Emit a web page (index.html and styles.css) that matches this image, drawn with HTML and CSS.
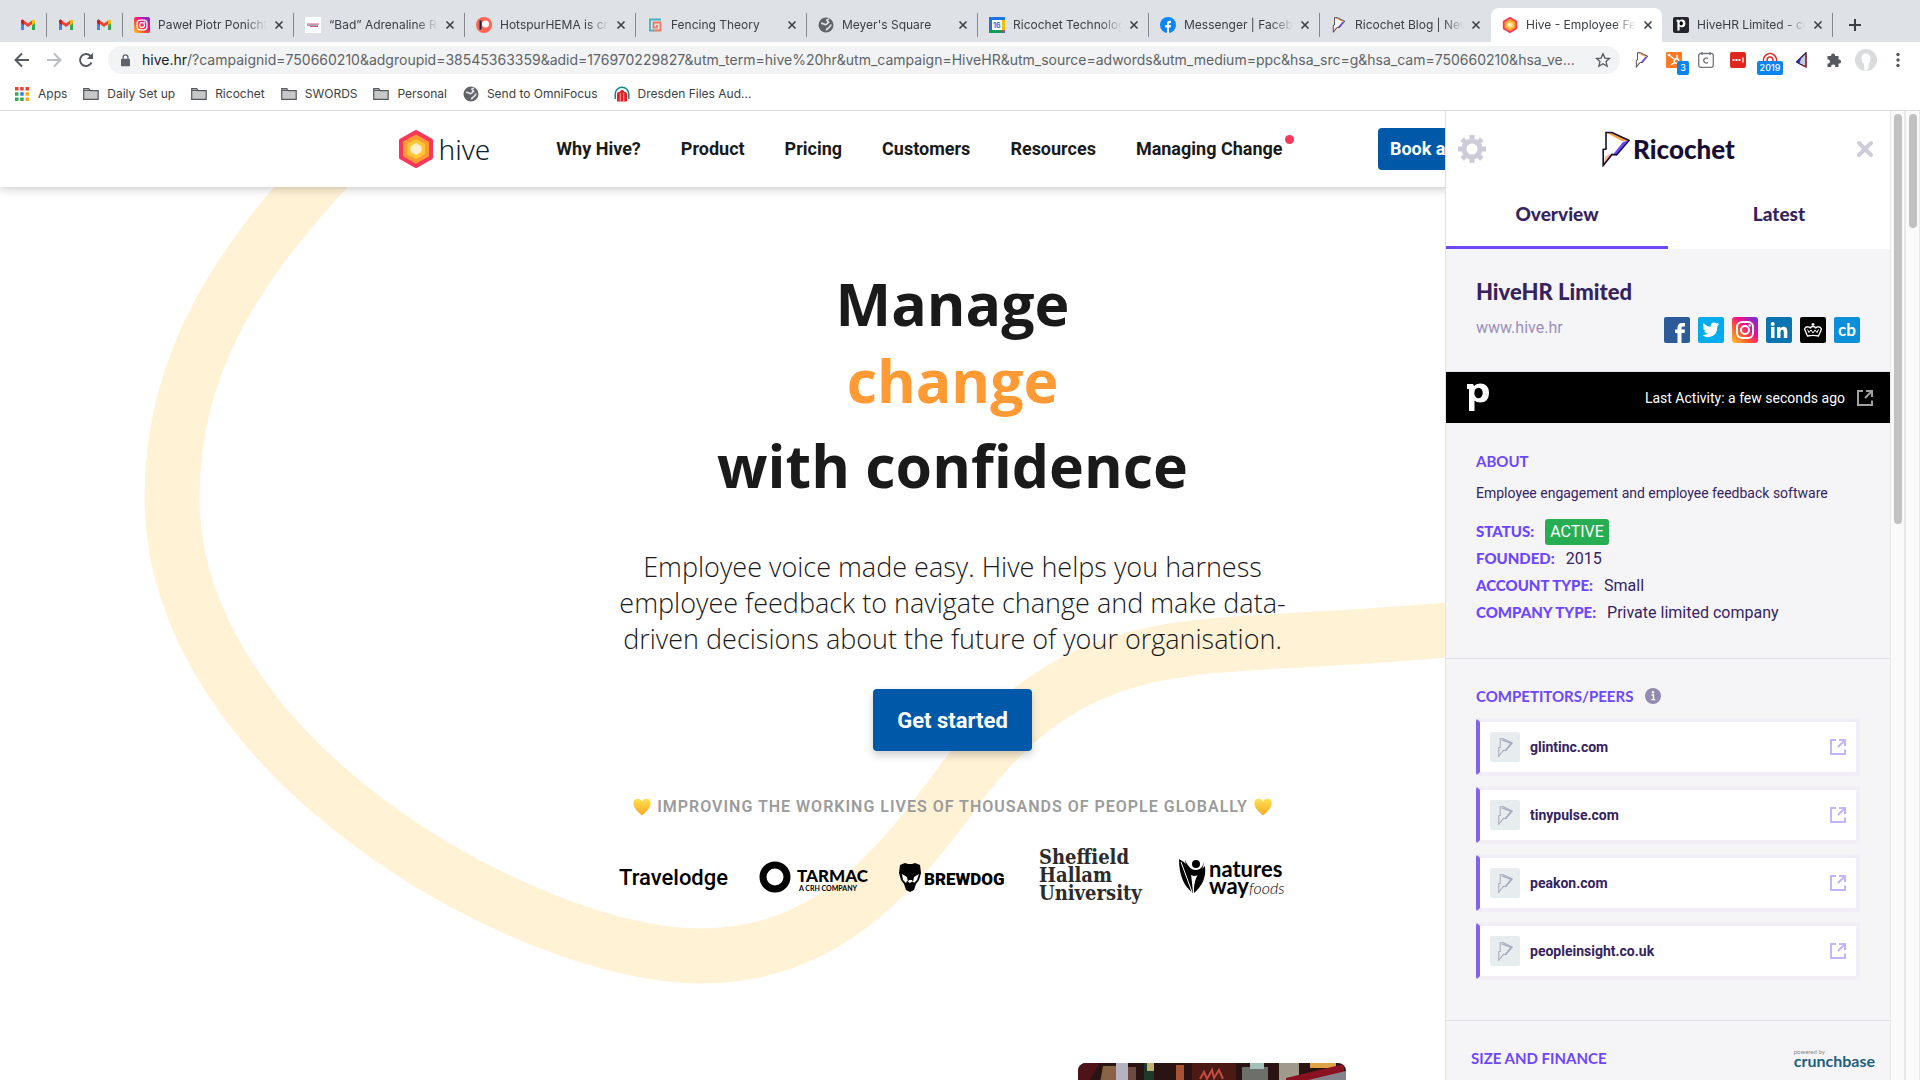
FILE: index.html
```
<!DOCTYPE html>
<html lang="en">
<head>
    <meta charset="UTF-8">
    <meta name="viewport" content="width=device-width, initial-scale=1.0">
    <title>Hive - Employee Feedback</title>
    <link rel="stylesheet" href="styles.css">
</head>
<body>
    <svg class="sprite" aria-hidden="true">
        <defs>
            <linearGradient id="insta" x1="0" y1="1" x2="1" y2="0">
                <stop offset="0" stop-color="#ffc53a"/>
                <stop offset=".35" stop-color="#ff5a2a"/>
                <stop offset=".6" stop-color="#f0108f"/>
                <stop offset="1" stop-color="#5a35e0"/>
            </linearGradient>
            <linearGradient id="heart" x1="0" y1="0" x2="0" y2="1">
                <stop offset="0" stop-color="#ffe14d"/>
                <stop offset="1" stop-color="#f9a825"/>
            </linearGradient>
        </defs>
        <symbol id="i-gmail" viewBox="0 0 16 16">
            <path d="M1 4v9h3V7z" fill="#4285f4"/>
            <path d="M15 4v9h-3V7z" fill="#34a853"/>
            <path d="M1 4.500L4 7l4 3 4-3V3.500L8 6.500 4 3.500 2.500 2.600Q1 2.600 1 4.500z" fill="#ea4335"/>
            <path d="M1 4.500V6l3 2.500V3.500L2.500 2.600Q1 2.600 1 4.500z" fill="#c5221f"/>
            <path d="M15 4.500V6l-3 2.500V3.500l1.500-.9Q15 2.600 15 4.500z" fill="#fbbc04"/>
        </symbol>
        <symbol id="i-insta" viewBox="0 0 26 26">
            <rect width="26" height="26" rx="3" fill="url(#insta)"/>
            <rect x="5" y="5" width="16" height="16" rx="5" fill="none" stroke="#fff" stroke-width="2"/>
            <circle cx="13" cy="13" r="4" fill="none" stroke="#fff" stroke-width="2"/>
            <circle cx="17.600" cy="8.400" r="1.200" fill="#fff"/>
        </symbol>
        <symbol id="i-strip" viewBox="0 0 16 16">
            <rect width="16" height="16" fill="#fff"/>
            <path d="M2 7h12M5 9.500h8" stroke="#d9549b"/>
            <path d="M2 8.200h11" stroke="#777"/>
        </symbol>
        <symbol id="i-patreon" viewBox="0 0 16 16">
            <circle cx="8" cy="8" r="8" fill="#ff6553"/>
            <circle cx="9.500" cy="7" r="3.500" fill="#fff"/>
            <path d="M3.500 3.500h2v9h-2z" fill="#10253f"/>
        </symbol>
        <symbol id="i-spiral" viewBox="0 0 16 16" fill="none" stroke-width="1.800">
            <path d="M14 2.500H3v11h4" stroke="#46b3bd"/>
            <path d="M6 13.500h7.500v-8h-7v5H10V8" stroke="#ee7a66"/>
        </symbol>
        <symbol id="i-globe" viewBox="0 0 16 16">
            <circle cx="8" cy="8" r="7.500" fill="#5f6368"/>
            <path d="M3 6.500c2.500-1 3 1.500 5 1 1.500-.4 1-1.500 2.500-2L9 3l2-1M8.500 13.500c0-2 2-2 3-3.500s1-2 2-2" fill="none" stroke="#dee1e6" stroke-width="1.800"/>
        </symbol>
        <symbol id="i-fb" viewBox="0 0 16 16">
            <circle cx="8" cy="8" r="8" fill="#0a84ff"/>
            <path d="M7 16v-5.500H5.200V8H7V6.500Q7 3.800 9.500 3.800h1.500V6H10q-1 0-1 1v1h2l-.4 2.500H9V16z" fill="#fff"/>
        </symbol>
        <symbol id="i-hex" viewBox="0 0 34 38">
            <path d="M17 2L32 10.500v17L17 36 2 27.500v-17z" fill="#f9375a" stroke="#f9375a" stroke-width="4" stroke-linejoin="round"/>
            <path d="M17 6l11.500 6.500v13L17 32 5.500 25.500v-13z" fill="#ff9a34" stroke="#ff9a34" stroke-width="3" stroke-linejoin="round"/>
            <path d="M17 10l8 4.500v9L17 28l-8-4.500v-9z" fill="#ffc936" stroke="#ffc936" stroke-width="2" stroke-linejoin="round"/>
            <path d="M17 13.500l5 3v5l-5 3-5-3v-5z" fill="#fff0cf" stroke="#fff0cf" stroke-linejoin="round"/>
        </symbol>
        <symbol id="i-rico" viewBox="0 0 28 36">
            <path d="M4 1.500h6l17 8L14.500 24l-4.500-.6L1.200 34.500V18.500L4 18z" fill="#fff"/>
            <path d="M5 2h5l16 7.500-6 .5z" fill="#ff9d3c"/>
            <path d="M26 9.500L14.500 24l-3.500-.6L21 11z" fill="#6c47ff"/>
            <path d="M10 23.400L1.500 34l1.500-8 4-3z" fill="#ffb8a0"/>
            <path d="M4 1.500h6l17 8L14.500 24l-4.500-.6L1.200 34.500V18.500L4 18z" fill="none" stroke="#160e35" stroke-width="1.600"/>
        </symbol>
        <symbol id="i-rico-grey" viewBox="0 0 28 36">
            <path d="M4 1.500h6l17 8L14.500 24l-4.500-.6L1.200 34.500V18.500L4 18z" fill="none" stroke="#a9a9bd" stroke-width="2"/>
            <path d="M7 3.500l18 6.500L14 23" fill="none" stroke="#a9a9bd" stroke-width="2.500"/>
        </symbol>
        <symbol id="i-p" viewBox="0 0 24 30">
            <path d="M1 2h6l1 2q2-2.500 6-2.500 9 0 9 9.500t-9 9.500q-3.500 0-5.500-2V29H3V7H1z" fill="currentColor"/>
            <ellipse cx="12.500" cy="11" rx="4.200" ry="5.200" class="hole"/>
        </symbol>
        <symbol id="i-x" viewBox="0 0 16 16">
            <path d="M4.500 4.500l7 7m0-7l-7 7" stroke="currentColor" stroke-width="1.600"/>
        </symbol>
        <symbol id="i-folder" viewBox="0 0 16 16">
            <path d="M.7 13.300V2.700h5l1.500 2h8v8.600z" fill="#c8c8c8" stroke="#55585c" stroke-width="1.200"/>
            <path d="M1 4.500h6.500" stroke="#55585c"/>
        </symbol>
        <symbol id="i-open" viewBox="0 0 16 16" fill="none" stroke="currentColor" stroke-width="2">
            <path d="M6 1H1v14h14v-4.500M9 1h6v6M15 1L8 8"/>
        </symbol>
    </svg>

    <div class="tab-strip">
        <a class="pin" href="#" aria-label="Gmail"><svg class="fav"><use href="#i-gmail"/></svg></a>
        <a class="pin" href="#" aria-label="Gmail"><svg class="fav"><use href="#i-gmail"/></svg></a>
        <a class="pin" href="#" aria-label="Gmail"><svg class="fav"><use href="#i-gmail"/></svg></a>
        <div class="tab"><svg class="fav"><use href="#i-insta"/></svg><span class="tab-title">Paweł Piotr Ponichtera</span><button class="tab-close" aria-label="Close"><svg><use href="#i-x"/></svg></button></div>
        <div class="tab"><svg class="fav"><use href="#i-strip"/></svg><span class="tab-title">“Bad” Adrenaline Rush</span><button class="tab-close" aria-label="Close"><svg><use href="#i-x"/></svg></button></div>
        <div class="tab"><svg class="fav"><use href="#i-patreon"/></svg><span class="tab-title">HotspurHEMA is creating</span><button class="tab-close" aria-label="Close"><svg><use href="#i-x"/></svg></button></div>
        <div class="tab"><svg class="fav"><use href="#i-spiral"/></svg><span class="tab-title">Fencing Theory</span><button class="tab-close" aria-label="Close"><svg><use href="#i-x"/></svg></button></div>
        <div class="tab"><svg class="fav"><use href="#i-globe"/></svg><span class="tab-title">Meyer's Square</span><button class="tab-close" aria-label="Close"><svg><use href="#i-x"/></svg></button></div>
        <div class="tab"><svg class="fav" viewBox="0 0 16 16"><path d="M0 0h16v16H0z" fill="#1a73e8"/><path d="M13 3h3v10h-3z" fill="#fbbc04"/><path d="M0 13h13v3H0z" fill="#0f9d58"/><path d="M13 13h3l-3 3z" fill="#ea4335"/><path d="M3 3h10v10H3z" fill="#fff"/><text x="4" y="11" class="cal-day">16</text></svg><span class="tab-title">Ricochet Technologies</span><button class="tab-close" aria-label="Close"><svg><use href="#i-x"/></svg></button></div>
        <div class="tab"><svg class="fav"><use href="#i-fb"/></svg><span class="tab-title">Messenger | Facebook</span><button class="tab-close" aria-label="Close"><svg><use href="#i-x"/></svg></button></div>
        <div class="tab no-line"><svg class="fav"><use href="#i-rico"/></svg><span class="tab-title">Ricochet Blog | News</span><button class="tab-close" aria-label="Close"><svg><use href="#i-x"/></svg></button></div>
        <div class="tab active"><svg class="fav"><use href="#i-hex"/></svg><span class="tab-title">Hive - Employee Feedback</span><button class="tab-close" aria-label="Close"><svg><use href="#i-x"/></svg></button></div>
        <div class="tab"><svg class="fav pd" viewBox="0 0 16 16"><rect width="16" height="16" rx="2" fill="#22262b"/><use href="#i-p" x="3" y="2" width="10" height="12"/></svg><span class="tab-title">HiveHR Limited - com</span><button class="tab-close" aria-label="Close"><svg><use href="#i-x"/></svg></button></div>
        <button class="new-tab" aria-label="New tab"><svg viewBox="0 0 16 16"><path d="M8 2v12M2 8h12" stroke="#3c4043" stroke-width="2"/></svg></button>
    </div>

    <div class="toolbar">
        <button class="tool" aria-label="Back"><svg viewBox="0 0 16 16"><path d="M15 8H2M8 1.500L1.500 8 8 14.500" fill="none" stroke="#55585c" stroke-width="1.900"/></svg></button>
        <button class="tool" aria-label="Forward"><svg viewBox="0 0 16 16"><path d="M1 8h13M8 1.500L14.500 8 8 14.500" fill="none" stroke="#babcbe" stroke-width="1.900"/></svg></button>
        <button class="tool" aria-label="Reload"><svg viewBox="0 0 16 16"><path d="M13.500 10.500A6 6 0 1 1 12.500 4" fill="none" stroke="#55585c" stroke-width="1.900"/><path d="M15 .8V7H8.800z" fill="#55585c"/></svg></button>
        <div class="omnibox">
            <svg class="lock" viewBox="0 0 10 14"><rect y="5" width="10" height="8.500" rx="1" fill="#5f6368"/><path d="M2.300 6V3.500a2.700 2.700 0 0 1 5.400 0V6" fill="none" stroke="#5f6368" stroke-width="1.400"/></svg>
            <label class="host" for="url">hive.hr</label>
            <input id="url" class="url" type="text" value="/?campaignid=750660210&amp;adgroupid=38545363359&amp;adid=176970229827&amp;utm_term=hive%20hr&amp;utm_campaign=HiveHR&amp;utm_source=adwords&amp;utm_medium=ppc&amp;hsa_src=g&amp;hsa_cam=750660210&amp;hsa_ve...">
            <button class="star" aria-label="Bookmark"><svg viewBox="0 0 16 16"><path d="M8 1.800l1.900 4.300 4.600.4-3.500 3.100 1.100 4.600L8 11.800l-4.100 2.400L5 9.600 1.500 6.500l4.600-.4z" fill="none" stroke="#55585c" stroke-width="1.300"/></svg></button>
        </div>
        <div class="extensions">
            <button class="ext" aria-label="Ricochet"><svg><use href="#i-rico"/></svg></button>
            <button class="ext" aria-label="HubSpot"><svg viewBox="0 0 16 16"><rect width="16" height="16" rx="1" fill="#ff7a22"/><path d="M3 3l5 4M11 3v4M5 13l3.500-2.500" stroke="#fff" stroke-width="1.300"/><circle cx="10.500" cy="9" r="2.300" fill="none" stroke="#fff" stroke-width="1.500"/><circle cx="3" cy="3" r="1.300" fill="#fff"/></svg><span class="count">3</span></button>
            <button class="ext" aria-label="Clipboard"><svg viewBox="0 0 16 16"><rect x=".7" y="1.500" width="14.600" height="13.800" rx="2" fill="#fff" stroke="#74777b" stroke-width="1.300"/><path d="M4 0v3M12 0v3" stroke="#74777b" stroke-width="1.300"/><path d="M10 6.700a2.500 2.500 0 1 0 0 3.600" fill="none" stroke="#74777b" stroke-width="1.300"/></svg></button>
            <button class="ext" aria-label="Passwords"><svg viewBox="0 0 16 16"><rect width="16" height="16" rx="2" fill="#e1251f"/><path d="M2.500 8h8.500" stroke="#fff" stroke-width="2" stroke-dasharray="2 1"/><path d="M13 5.500v5" stroke="#fff" stroke-width="1.200"/></svg></button>
            <button class="ext" aria-label="Events"><svg viewBox="0 0 16 16"><path d="M2.500 11.500A6.500 6.500 0 1 1 13.500 11.500" fill="none" stroke="#e1251f" stroke-width="1.500"/><path d="M5 9q0-4 3-4t3 4" fill="none" stroke="#e1251f" stroke-width="1.500"/></svg><span class="count wide">2019</span></button>
            <button class="ext" aria-label="Ricochet beta"><svg viewBox="0 0 16 16"><path d="M12 .8L2.500 10l2.500 1.500 7 3.500z" fill="#c9cbe0" stroke="#1d1640" stroke-width="1.200"/><path d="M7.500 5L2.500 10l3 1.500z" fill="#2a2ad0"/><path d="M12 2v12.500L8 13" fill="none" stroke="#a2302d" stroke-width="1.300"/></svg></button>
            <button class="ext" aria-label="Extensions"><svg viewBox="0 0 16 16"><path d="M1.500 4h3.700a2 2 0 1 1 3.800 0h3.500v3.700a2 2 0 1 1 0 3.800V15H9.200a2 2 0 1 0-3.900 0H1.500v-3.600a2 2 0 1 0 0-3.900z" fill="#55585c"/></svg></button>
            <button class="ext" aria-label="Profile"><svg class="avatar" viewBox="0 0 22 22"><circle cx="11" cy="11" r="11" fill="#dadbdc"/><path d="M11 4.500q4.500 0 4.500 5.500 0 3-2 5v4.500L11 22l-2-2v-5q-2.500-2-2.500-5 0-5.500 4.500-5.500z" fill="#fff"/></svg></button>
            <button class="ext" aria-label="Menu"><svg viewBox="0 0 16 16" fill="#55585c"><circle cx="8" cy="2.500" r="1.700"/><circle cx="8" cy="8" r="1.700"/><circle cx="8" cy="13.500" r="1.700"/></svg></button>
        </div>
    </div>

    <div class="bookmarks">
        <a href="#"><svg class="apps" viewBox="0 0 14 14"><path d="M0 0h3.500v3.500H0zM5.200 0h3.500v3.500H5.200zM10.500 0H14v3.500h-3.500z" fill="#ea4335"/><path d="M0 5.200h3.500v3.500H0zM0 10.500h3.500V14H0zM5.200 10.500h3.500V14H5.200z" fill="#34a853"/><path d="M5.200 5.200h3.500v3.500H5.200z" fill="#2f80ed"/><path d="M10.500 5.200H14v3.500h-3.500zM10.500 10.500H14V14h-3.500z" fill="#fbab18"/></svg>Apps</a>
        <a href="#"><svg class="fav"><use href="#i-folder"/></svg>Daily Set up</a>
        <a href="#"><svg class="fav"><use href="#i-folder"/></svg>Ricochet</a>
        <a href="#"><svg class="fav"><use href="#i-folder"/></svg>SWORDS</a>
        <a href="#"><svg class="fav"><use href="#i-folder"/></svg>Personal</a>
        <a href="#"><svg class="fav"><use href="#i-globe"/></svg>Send to OmniFocus</a>
        <a href="#"><svg class="fav" viewBox="0 0 16 16"><path d="M1.200 13V8a6.800 6.800 0 0 1 13.600 0v5" fill="none" stroke="#128a84" stroke-width="1.500"/><path d="M3 8q0-2 1.700-2T6.300 5 8 4t1.700 1 1.600 1T13 8v7.500H3z" fill="#e32127"/><path d="M6.300 7v8M9.700 7v8" stroke="#fff" stroke-width=".6"/></svg>Dresden Files Aud...</a>
    </div>

    <div class="viewport">
        <div class="page">
            <header class="site-header">
                <div class="container nav">
                    <a class="brand" href="#"><svg><use href="#i-hex"/></svg>hive</a>
                    <nav class="menu">
                        <a href="#">Why Hive?</a>
                        <a href="#">Product</a>
                        <a href="#">Pricing</a>
                        <a href="#">Customers</a>
                        <a href="#">Resources</a>
                        <a href="#" class="new">Managing Change</a>
                    </nav>
                    <button class="btn btn-demo">Book a demo</button>
                </div>
            </header>

            <main class="hero">
                <svg class="swoosh" viewBox="0 0 1905 893" preserveAspectRatio="xMidYMin slice" aria-hidden="true">
                    <path d="M338-30C244 70 172 170 172 310C172 573 530 769 702 769C830 769 900 680 963 593C1060 468 1150 460 1300 453Q1600 438 1905 380" fill="none" stroke="#fff2d5" stroke-width="55"/>
                </svg>
                <h1>Manage <span>change</span> with confidence</h1>
                <p class="lead">Employee voice made easy. Hive helps you harness employee feedback to navigate change and make data-driven decisions about the future of your organisation.</p>
                <button class="btn btn-start">Get started</button>
                <div class="claim">
                    <svg viewBox="0 0 18 18"><path d="M9 17.500Q.3 10.500.3 5.500.3.800 4.800.800 7.800.800 9 4q1.200-3.200 4.200-3.200 4.500 0 4.500 4.700 0 5-8.700 12z" fill="url(#heart)"/></svg>
                    <span>IMPROVING THE WORKING LIVES OF THOUSANDS OF PEOPLE GLOBALLY</span>
                    <svg viewBox="0 0 18 18"><path d="M9 17.500Q.3 10.500.3 5.500.3.800 4.800.800 7.800.800 9 4q1.200-3.200 4.200-3.200 4.500 0 4.500 4.700 0 5-8.700 12z" fill="url(#heart)"/></svg>
                </div>
                <div class="clients">
                    <svg viewBox="0 0 108 60"><text x="0" y="38" class="travelodge">Travelodge</text></svg>
                    <svg viewBox="0 0 108 60"><circle cx="16" cy="30" r="12" fill="none" stroke="#000" stroke-width="7"/><text x="38" y="35" class="tarmac">TARMAC</text><text x="40" y="44" class="tarmac-sub">A CRH COMPANY</text></svg>
                    <svg viewBox="0 0 108 60"><path d="M1 18l5-2 3 1h4l3-1 5 2 1 8-2 7-3 4-2 6-4 2-4-2-2-6-3-4-2-7z"/><path d="M3 27l5 3 1 5 1-2h3l1 2 1-5 5-3-2 6-3 3-1-2-3 2-3-2-1 2-3-3z" fill="#fff"/><text x="25" y="38" class="brewdog">BREWDOG</text></svg>
                    <svg viewBox="0 0 108 60"><text class="hallam"><tspan x="0" y="17">Sheffield</tspan><tspan x="0" y="35">Hallam</tspan><tspan x="0" y="53">University</tspan></text></svg>
                    <svg viewBox="0 0 108 60"><circle cx="17" cy="17" r="4"/><path d="M0 12q10 5 12 15 1 8 2 19Q0 36 0 12z"/><path d="M26 19q2 16-11 27-1-17 11-27z"/><path d="M6 13q4 10 11 10 6 0 8-8-2 14-10 14Q8 28 6 13z"/><path d="M2 15l11 30" stroke="#fff"/><text x="30" y="30" class="natures">natures</text><text x="30" y="47" class="natures">way</text><text x="70" y="47" class="foods">foods</text></svg>
                </div>
            </main>

            <div class="container">
                <svg class="photo" viewBox="0 0 268 180" preserveAspectRatio="xMidYMin slice" aria-label="People at a market stall">
                    <rect width="268" height="180" fill="#2a1413"/>
                    <path d="M0 0h22L10 20H0z" fill="#4d1318"/>
                    <path d="M25 3h14v40H18z" fill="#8a6245"/>
                    <path d="M38 0h12v40H38z" fill="#b6b3c1"/>
                    <path d="M50 4h8v40h-8z" fill="#6e4a41"/>
                    <path d="M66 0h10v40H66z" fill="#1f3a2d"/><path d="M69 0h7v8h-7z" fill="#c1b36a"/>
                    <path d="M98 2h8v40h-8z" fill="#a85336"/>
                    <path d="M114 0h44v60h-44z" fill="#4c1a14"/>
                    <path d="M122 16l4-7 3 7 5-9 2 8 5-8 4 9" fill="none" stroke="#c34c3f" stroke-width="2"/>
                    <path d="M164 4h26v40h-26z" fill="#6d6f6a"/><path d="M172 0h14v6h-14z" fill="#a5c0bb"/>
                    <path d="M201 0h20v40h-20z" fill="#9f9a8c"/>
                    <path d="M232 0h26v5h-26z" fill="#e0a448"/>
                    <path d="M208 15l58-14v12l-58 16z" fill="#8a1220"/>
                    <path d="M222 19l46-11v40h-46z" fill="#85838e"/>
                </svg>
            </div>
        </div>

        <aside class="panel">
            <div class="panel-main">
                <div class="panel-head">
                    <button class="icon-btn" aria-label="Settings"><svg viewBox="0 0 28 28"><circle cx="14" cy="14" r="8" fill="none" stroke="#cfccd9" stroke-width="5"/><path d="M14 0v5M14 23v5M0 14h5M23 14h5M4.100 4.100l3.500 3.500M20.400 20.400l3.500 3.500M4.100 23.900l3.500-3.500M20.400 7.600l3.500-3.500" stroke="#cfccd9" stroke-width="5"/></svg></button>
                    <a class="rico-brand" href="#"><svg><use href="#i-rico"/></svg>Ricochet</a>
                    <button class="icon-btn" aria-label="Close panel"><svg viewBox="0 0 28 28"><path d="M8 8l12 12M20 8L8 20" stroke="#cfccd9" stroke-width="4" stroke-linecap="round"/></svg></button>
                </div>
                <div class="panel-tabs">
                    <button class="panel-tab current">Overview</button>
                    <button class="panel-tab">Latest</button>
                </div>

                <section class="company">
                    <h2>HiveHR Limited</h2>
                    <div class="company-row">
                        <a class="site" href="#">www.hive.hr</a>
                        <div class="social">
                            <a href="#" aria-label="Facebook"><svg viewBox="0 0 26 26"><rect width="26" height="26" rx="2" fill="#2d5b9a"/><path d="M13.500 26V16H11v-3.500h2.500V11q0-5 4.500-5h3v3.500h-2q-1.500 0-1.500 1.500v1.500H21l-.5 3.500h-3v10z" fill="#fff"/></svg></a>
                            <a href="#" aria-label="Twitter"><svg viewBox="0 0 26 26"><rect width="26" height="26" rx="2" fill="#00acee"/><path d="M4.500 18q3 .3 5-1.500-2.500-.3-3.200-2.500h1.500Q5 13 5 10.300l1.500.4Q4 8.500 5.500 6q3 3.500 7.300 3.800-.6-4.300 3.200-4.300 1.500 0 2.500 1l2.300-.9q-.4 1.200-1.500 2l2-.5q-.8 1.200-1.800 2-.2 11.200-9.500 11.200-3 0-5.500-2.300z" fill="#fff"/></svg></a>
                            <a href="#" aria-label="Instagram"><svg><use href="#i-insta"/></svg></a>
                            <a href="#" aria-label="LinkedIn"><svg viewBox="0 0 26 26"><rect width="26" height="26" rx="2" fill="#0a74b0"/><path d="M5 10h3.500v11H5zM11 10h3.300v1.500q1-1.800 3.400-1.800 3.600 0 3.600 4.600V21h-3.500v-6q0-2.300-1.600-2.300-1.700 0-1.700 2.300v6H11z" fill="#fff"/><circle cx="6.700" cy="7" r="2" fill="#fff"/></svg></a>
                            <a href="#" aria-label="Companies House"><svg viewBox="0 0 26 26"><rect width="26" height="26" rx="2"/><path d="M7.500 19L4.500 12q1.500-3 4-2 1.500 0 2 1.500 0-2 2.500-2t2.500 2q.5-1.500 2-1.500 2.500-1 4 2l-3 7q-5.500-1.300-11 0zM13 6v4M11.500 7.500h3" fill="none" stroke="#fff" stroke-width="1.300"/><path d="M7.500 12.500l1.500 3 2-2.500 2 3 2-3 2 2.500 1.500-3" fill="none" stroke="#fff"/></svg></a>
                            <a class="cb" href="#">cb</a>
                        </div>
                    </div>
                </section>

                <div class="activity">
                    <svg class="pd-logo"><use href="#i-p"/></svg>
                    <span>Last Activity: a few seconds ago</span>
                    <a href="#" aria-label="Open record"><svg class="open"><use href="#i-open"/></svg></a>
                </div>

                <section class="about">
                    <h3>ABOUT</h3>
                    <p>Employee engagement and employee feedback software</p>
                    <dl>
                        <div><dt>STATUS:</dt><dd><span class="badge">ACTIVE</span></dd></div>
                        <div><dt>FOUNDED:</dt><dd>2015</dd></div>
                        <div><dt>ACCOUNT TYPE:</dt><dd>Small</dd></div>
                        <div><dt>COMPANY TYPE:</dt><dd>Private limited company</dd></div>
                    </dl>
                </section>

                <section class="peers">
                    <h3>COMPETITORS/PEERS <svg class="info" viewBox="0 0 16 16"><circle cx="8" cy="8" r="8" fill="#938bad"/><path d="M6.500 7h2v4.500M6.300 11.700h4" fill="none" stroke="#fff" stroke-width="1.300"/><circle cx="8" cy="4.300" r="1.200" fill="#fff"/></svg></h3>
                    <div class="peer-list">
                        <a class="peer" href="#"><span class="thumb"><svg><use href="#i-rico-grey"/></svg></span>glintinc.com<svg class="open"><use href="#i-open"/></svg></a>
                        <a class="peer" href="#"><span class="thumb"><svg><use href="#i-rico-grey"/></svg></span>tinypulse.com<svg class="open"><use href="#i-open"/></svg></a>
                        <a class="peer" href="#"><span class="thumb"><svg><use href="#i-rico-grey"/></svg></span>peakon.com<svg class="open"><use href="#i-open"/></svg></a>
                        <a class="peer" href="#"><span class="thumb"><svg><use href="#i-rico-grey"/></svg></span>peopleinsight.co.uk<svg class="open"><use href="#i-open"/></svg></a>
                    </div>
                </section>

                <section class="finance">
                    <h3>SIZE AND FINANCE</h3>
                    <a class="crunchbase" href="#"><small>powered by</small>crunchbase</a>
                </section>
            </div>
            <div class="scrollbar"><div class="scroll-thumb panel-thumb"></div></div>
        </aside>
        <div class="scrollbar"><div class="scroll-thumb page-thumb"></div></div>
    </div>
</body>
</html>
```
FILE: styles.css
```
* {
    box-sizing: border-box;
}

body {
    margin: 0;
    height: 100vh;
    display: flex;
    flex-direction: column;
    overflow: hidden;
    background: #fff;
    font-family: "Open Sans", sans-serif;
    color: #1a1a1a;
}

a {
    color: inherit;
    text-decoration: none;
}

button {
    border: none;
    background: none;
    padding: 0;
    font: inherit;
    color: inherit;
    cursor: pointer;
}

svg {
    display: block;
    flex: none;
}

h1, h2, h3, p, dl, dd {
    margin: 0;
}

.sprite {
    position: absolute;
    width: 0;
    height: 0;
}

/* browser chrome */
.tab-strip, .toolbar, .bookmarks {
    flex: none;
    display: flex;
    align-items: center;
    font: 12px/16px Inter, sans-serif;
    color: #3c4043;
}

.tab-strip {
    height: 42px;
    padding: 8px 9px 0;
    background: #dee1e6;
}

.fav {
    width: 16px;
    height: 16px;
}

.pin {
    width: 38px;
    height: 24px;
    display: flex;
    align-items: center;
    justify-content: center;
    border-right: 1px solid #85888c;
}

.tab {
    flex: 0 1 171px;
    height: 24px;
    min-width: 0;
    display: flex;
    align-items: center;
    gap: 8px;
    padding: 0 6px 0 11px;
    border-right: 1px solid #85888c;
}

.tab.no-line {
    border-color: transparent;
}

.tab.active {
    height: 34px;
    background: #fff;
    border: none;
    border-radius: 8px 8px 0 0;
}

.tab-title {
    flex: 1;
    overflow: hidden;
    white-space: nowrap;
    -webkit-mask-image: linear-gradient(to right, #000 80%, transparent);
    mask-image: linear-gradient(to right, #000 80%, transparent);
}

.tab-close {
    margin-left: -4px;
}

.tab-close svg {
    width: 16px;
    height: 16px;
}

.cal-day {
    font: 700 7px Inter, sans-serif;
    fill: #1a73e8;
}

.pd {
    color: #fff;
}

.hole {
    fill: #000;
}

.new-tab {
    margin-left: 14px;
}

.new-tab svg {
    width: 16px;
    height: 16px;
}

.toolbar {
    height: 36px;
    padding: 0 6px 0 6px;
}

.tool, .ext {
    position: relative;
    width: 32px;
    height: 28px;
    display: flex;
    align-items: center;
    justify-content: center;
}

.tool svg, .ext svg, .star svg {
    width: 16px;
    height: 16px;
}

.ext .avatar {
    width: 22px;
    height: 22px;
}

.omnibox {
    flex: 1;
    height: 28px;
    margin: 0 6px;
    padding: 0 9px 0 13px;
    display: flex;
    align-items: center;
    border-radius: 14px;
    background: #f1f3f4;
    font-size: 14px;
}

.lock {
    width: 9px;
    height: 13px;
    margin-right: 12px;
}

.host {
    color: #202124;
}

.url {
    flex: 1;
    min-width: 0;
    padding: 0;
    border: none;
    outline: none;
    background: none;
    font: inherit;
    color: #5f6368;
}

.extensions {
    display: flex;
}

.count {
    position: absolute;
    right: 1px;
    bottom: -1px;
    padding: 0 2px;
    min-width: 12px;
    border-radius: 2px;
    background: #0b84ee;
    color: #fff;
    font: 500 9px/14px Inter, sans-serif;
    text-align: center;
}

.count.wide {
    right: 3px;
    width: 26px;
}

.bookmarks {
    height: 33px;
    padding: 0 15px;
    gap: 16px;
    border-bottom: 1px solid #dadce0;
}

.bookmarks a {
    display: flex;
    align-items: center;
    gap: 8px;
}

.apps {
    width: 14px;
    height: 14px;
    margin-right: 1px;
}

/* site */
.viewport {
    position: relative;
    flex: 1;
    min-height: 0;
    display: flex;
}

.page {
    flex: 1;
    overflow: hidden;
}

.container {
    max-width: 1110px;
    margin: 0 auto;
}

.site-header {
    position: relative;
    z-index: 1;
    background: #fff;
    box-shadow: 0 1px 10px rgba(0, 0, 0, .25);
}

.nav {
    height: 76px;
    display: flex;
    align-items: center;
    font: 700 18px/24px Roboto, sans-serif;
    white-space: nowrap;
}

.brand {
    display: flex;
    align-items: center;
    gap: 5px;
    margin-right: 66px;
    font: 300 28px/38px "Noto Sans", sans-serif;
    color: #0d2233;
}

.brand svg {
    width: 36px;
    height: 38px;
}

.menu {
    display: flex;
    gap: 40px;
}

.menu .new {
    position: relative;
}

.new::after {
    content: "";
    position: absolute;
    top: -2px;
    right: -12px;
    width: 9px;
    height: 9px;
    border-radius: 50%;
    background: #f9375a;
}

.btn {
    background: #0059a8;
    color: #fff;
    border-radius: 4px;
    font-family: Roboto, sans-serif;
    font-weight: 700;
}

.btn-demo {
    height: 42px;
    margin-left: auto;
    padding: 0 12px;
}

.hero {
    position: relative;
    display: flex;
    flex-direction: column;
    align-items: center;
    padding: 78px 20px 156px;
    text-align: center;
}

.hero > * {
    position: relative;
}

.hero .swoosh {
    position: absolute;
    top: 0;
    left: 0;
    width: 100%;
    height: 893px;
}

.hero h1 {
    max-width: 560px;
    font-size: 59px;
    line-height: 77px;
    font-weight: 700;
}

.hero h1 span {
    display: block;
    padding-bottom: 8px;
    color: #ff9a34;
}

.lead {
    max-width: 690px;
    margin-top: 45px;
    font-size: 27px;
    line-height: 36px;
    font-weight: 300;
}

.btn-start {
    height: 62px;
    margin-top: 32px;
    padding: 0 24px;
    font-size: 22px;
    box-shadow: 0 4px 8px rgba(0, 0, 0, .2);
}

.claim {
    display: flex;
    align-items: center;
    gap: 6px;
    margin-top: 46px;
    font: 600 16px/20px Roboto, sans-serif;
    letter-spacing: 1px;
    color: #9b9b9b;
}

.claim svg {
    width: 18px;
    height: 18px;
}

.clients {
    display: flex;
    gap: 32px;
    margin-top: 30px;
}

.clients svg {
    width: 108px;
    height: 60px;
    overflow: visible;
}

.travelodge {
    font: 500 22px Roboto, sans-serif;
}

.tarmac {
    font: 900 17px Lato, sans-serif;
}

.tarmac-sub {
    font: 700 7px Lato, sans-serif;
}

.brewdog {
    font: 900 17px Roboto, sans-serif;
}

.hallam {
    font: 700 20px "DejaVu Serif Condensed", "DejaVu Serif", serif;
    fill: #2b2b2b;
}

.natures {
    font: 700 22px Lato, sans-serif;
}

.foods {
    font: italic 300 16px Lato, sans-serif;
}

.photo {
    width: 268px;
    height: 180px;
    margin-left: 680px;
    border-radius: 8px;
}

/* side panel, lies over the site */
.panel {
    position: absolute;
    z-index: 2;
    top: 0;
    right: 15px;
    bottom: 0;
    width: 460px;
    display: flex;
    overflow: hidden;
    border-left: 1px solid #e1e0e6;
    background: #f5f5f8;
    font-family: Roboto, sans-serif;
    font-size: 16px;
    color: #35235f;
}

.panel-main {
    flex: 1;
}

.panel-head {
    height: 76px;
    padding: 0 11px 0 12px;
    display: flex;
    align-items: center;
    justify-content: space-between;
    background: #fff;
}

.icon-btn svg {
    width: 28px;
    height: 28px;
}

.rico-brand {
    display: flex;
    align-items: center;
    gap: 3px;
    font: 900 26px/36px Lato, sans-serif;
    color: #160e35;
}

.rico-brand svg {
    width: 28px;
    height: 36px;
}

.panel-tabs {
    display: flex;
    background: #fff;
}

.panel-tab {
    flex: 1;
    height: 62px;
    padding-bottom: 5px;
    border-bottom: 3px solid transparent;
    font: 900 19px/24px Lato, sans-serif;
}

.panel-tab.current {
    border-color: #6c47ff;
}

.company {
    padding: 29px 30px 28px;
    border-bottom: 1px solid #e1e0e6;
}

.company h2 {
    font: 900 22px/28px Lato, sans-serif;
}

.company-row {
    display: flex;
    justify-content: space-between;
    margin-top: 11px;
}

.site {
    line-height: 22px;
    color: #9a8fb8;
}

.social {
    display: flex;
    gap: 8px;
}

.social a, .social svg {
    width: 26px;
    height: 26px;
}

.cb {
    border-radius: 2px;
    background: #0a8fd8;
    color: #fff;
    font: 700 17px/26px Lato, sans-serif;
    text-align: center;
}

.activity {
    height: 51px;
    padding: 0 17px 0 20px;
    display: flex;
    align-items: center;
    gap: 12px;
    background: #000;
    color: #fff;
    font-size: 14px;
}

.pd-logo {
    width: 24px;
    height: 30px;
    margin-right: auto;
    margin-bottom: 2px;
}

.open {
    width: 16px;
    height: 16px;
}

.activity .open {
    color: #a0a0a0;
}

h3 {
    font: 700 15px/20px Lato, sans-serif;
    color: #6c47ff;
}

.about {
    padding: 28px 30px 32px;
    border-bottom: 1px solid #e1e0e6;
}

.about p {
    margin-top: 12px;
    font-size: 14px;
    line-height: 20px;
}

.about dl {
    margin-top: 15px;
}

.about dl div {
    height: 27px;
    display: flex;
    align-items: baseline;
    gap: 11px;
    line-height: 26px;
}

.about dt {
    font: 900 15px/26px Lato, sans-serif;
    color: #6c47ff;
}

.badge {
    display: block;
    padding: 0 5px;
    border-radius: 3px;
    background: #27ae52;
    color: #fff;
}

.peers {
    padding: 27px 30px 40px;
    border-bottom: 1px solid #e1e0e6;
}

.peers h3 {
    display: flex;
    align-items: center;
    gap: 12px;
}

.info {
    width: 16px;
    height: 16px;
}

.peer-list {
    display: flex;
    flex-direction: column;
    gap: 10px;
    margin-top: 12px;
}

.peer {
    height: 58px;
    padding: 0 10px;
    display: flex;
    align-items: center;
    gap: 10px;
    border: 4px solid #f1eef8;
    border-left-color: #8560f5;
    border-radius: 4px;
    background: #fff;
    font-size: 14px;
    font-weight: 700;
}

.thumb {
    width: 30px;
    height: 30px;
    display: flex;
    align-items: center;
    justify-content: center;
    border-radius: 2px;
    background: #e7ecef;
}

.thumb svg {
    width: 15px;
    height: 19px;
}

.peer .open {
    margin-left: auto;
    color: #c3b4fb;
}

.finance {
    padding: 27px 15px 26px 25px;
    display: flex;
    align-items: center;
    justify-content: space-between;
}

.crunchbase {
    font: 700 16px/14px Lato, sans-serif;
    color: #1f5f7d;
}

.crunchbase small {
    display: block;
    font-size: 6px;
    line-height: 5px;
    font-weight: 400;
    color: #888;
}

.scrollbar {
    flex: none;
    width: 15px;
    padding: 3px;
    border-left: 1px solid #e8e8e8;
    border-right: 1px solid #e8e8e8;
    background: #fafafa;
}

.scroll-thumb {
    width: 8px;
    border-radius: 4px;
    background: #c1c1c1;
}

.panel-thumb {
    height: 410px;
}

.page-thumb {
    height: 114px;
}
```
